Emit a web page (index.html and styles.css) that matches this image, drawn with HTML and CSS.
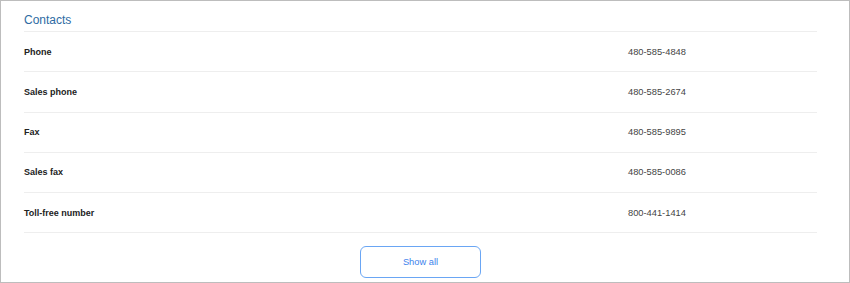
FILE: index.html
```html
<!DOCTYPE html>
<html>
<head>
<meta charset="utf-8">
<link rel="stylesheet" href="styles.css">
</head>
<body>
<div class="frame">
  <div class="panel">
    <h2 class="title">Contacts</h2>
    <ul class="list">
      <li class="row"><span class="label">Phone</span><span class="value">480-585-4848</span></li>
      <li class="row"><span class="label">Sales phone</span><span class="value">480-585-2674</span></li>
      <li class="row"><span class="label">Fax</span><span class="value">480-585-9895</span></li>
      <li class="row"><span class="label">Sales fax</span><span class="value">480-585-0086</span></li>
      <li class="row"><span class="label">Toll-free number</span><span class="value">800-441-1414</span></li>
    </ul>
    <div class="actions"><button class="show-all">Show all</button></div>
  </div>
</div>
</body>
</html>
```
FILE: styles.css
```css
* { box-sizing: border-box; }
html, body { margin: 0; padding: 0; background: #fff; }
body { font-family: "Liberation Sans", Arial, sans-serif; }
.frame {
  width: 850px;
  height: 283px;
  border: 1px solid #bdbdbd;
  overflow: hidden;
}
.panel {
  width: 816px;
  padding-left: 23px;
}
.title {
  margin: 0;
  height: 31px;
  padding-top: 12px;
  font-size: 12px;
  font-weight: normal;
  line-height: 14px;
  color: #2e6ba3;
  border-bottom: 1px solid #eeeeee;
}
.list { list-style: none; margin: 0; padding: 0; }
.row {
  display: grid;
  grid-template-columns: 604px 1fr;
  align-items: center;
  height: 40.25px;
  border-bottom: 1px solid #eeeeee;
}
.label { font-size: 9px; font-weight: bold; color: #222; }
.value { font-size: 9.3px; color: #444; }
.actions {
  display: flex;
  justify-content: center;
  padding-top: 13px;
}
.show-all {
  width: 121px;
  height: 32px;
  border: 1px solid #6aa6f4;
  border-radius: 6px;
  background: #fff;
  color: #3d82ec;
  font-family: "Liberation Sans", Arial, sans-serif;
  font-size: 9.3px;
  padding: 0;
}
```
